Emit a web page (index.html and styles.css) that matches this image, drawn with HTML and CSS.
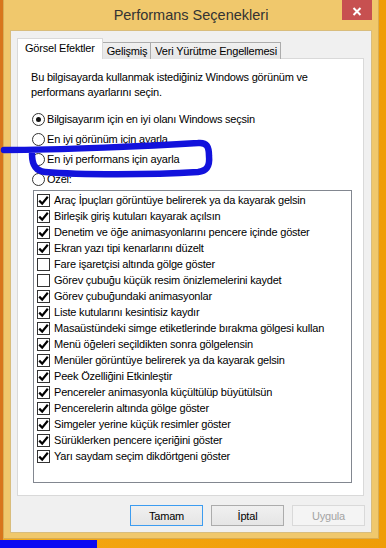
FILE: index.html
```html
<!DOCTYPE html>
<html lang="tr">

<head>
    <meta charset="UTF-8">
    <meta name="viewport" content="width=device-width, initial-scale=1.0">
    <title>Performans Seçenekleri</title>
    <link rel="stylesheet" href="styles.css">
</head>

<body>
    <div class="window">
        <div class="titlebar">
            <span class="title">Performans Seçenekleri</span>
            <button class="close" type="button">
                <svg width="10" height="9" viewBox="0 0 10 9">
                    <path d="M1.5 1 L8.5 8 M8.5 1 L1.5 8" stroke="#fff" stroke-width="2" />
                </svg>
            </button>
        </div>
        <div class="client">
            <div class="tabs">
                <div class="tab active">Görsel Efektler</div>
                <div class="tab">Gelişmiş</div>
                <div class="tab">Veri Yürütme Engellemesi</div>
            </div>
            <div class="panel">
                <p class="intro">Bu bilgisayarda kullanmak istediğiniz Windows görünüm ve<br>performans ayarlarını seçin.</p>
                <div class="radios">
                    <div class="radio-row"><span class="radio checked"></span>Bilgisayarım için en iyi olanı Windows seçsin</div>
                    <div class="radio-row"><span class="radio"></span>En iyi görünüm için ayarla</div>
                    <div class="radio-row"><span class="radio"></span>En iyi performans için ayarla</div>
                    <div class="radio-row"><span class="radio"></span>Özel:</div>
                </div>
                <div class="listbox" id="effects"></div>
            </div>
            <div class="buttons">
                <button class="btn default" type="button">Tamam</button>
                <button class="btn" type="button">İptal</button>
                <button class="btn" type="button" disabled>Uygula</button>
            </div>
        </div>
    </div>
    <div class="scribble-bottom"></div>

    <svg class="scribble" width="386" height="548" viewBox="0 0 386 548">
        <path d="M4 150 C60 150, 150 146, 198 143 C207 142, 209 147, 209 156 C210 166, 207 171, 198 172 C150 175, 80 175, 45 172 C35 171, 32 164, 32 154"
            fill="none" stroke="#1212dc" stroke-width="6.5" stroke-linecap="round" stroke-linejoin="round" />
    </svg>

    <script>
    const effects = [
        ["Araç İpuçları görüntüye belirerek ya da kayarak gelsin", true],
        ["Birleşik giriş kutuları kayarak açılsın", true],
        ["Denetim ve öğe animasyonlarını pencere içinde göster", true],
        ["Ekran yazı tipi kenarlarını düzelt", true],
        ["Fare işaretçisi altında gölge göster", false],
        ["Görev çubuğu küçük resim önizlemelerini kaydet", false],
        ["Görev çubuğundaki animasyonlar", true],
        ["Liste kutularını kesintisiz kaydır", true],
        ["Masaüstündeki simge etiketlerinde bırakma gölgesi kullan", true],
        ["Menü öğeleri seçildikten sonra gölgelensin", true],
        ["Menüler görüntüye belirerek ya da kayarak gelsin", true],
        ["Peek Özelliğini Etkinleştir", true],
        ["Pencereler animasyonla küçültülüp büyütülsün", true],
        ["Pencerelerin altında gölge göster", true],
        ["Simgeler yerine küçük resimler göster", true],
        ["Sürüklerken pencere içeriğini göster", true],
        ["Yarı saydam seçim dikdörtgeni göster", true]
    ];

    const tick = '<svg width="11" height="11" viewBox="0 0 11 11"><path d="M1.2 5.6 L4.2 8.6 L9.8 1.8" fill="none" stroke="#000" stroke-width="2.2"/></svg>';
    const list = document.getElementById("effects");

    for (const [label, on] of effects) {
        const row = document.createElement("div");
        row.className = "item";
        row.innerHTML = '<span class="check">' + (on ? tick : '') + '</span><span></span>';
        row.lastChild.textContent = label;
        list.appendChild(row);
    }
    </script>
</body>

</html>
```
FILE: styles.css
```css
html, body {
    margin: 0;
    width: 386px;
    height: 548px;
    overflow: hidden;
}

body {
    background: linear-gradient(to right, #d8761c 0 3px, #f4a712 3px, #ef9d08);
    font-family: "Liberation Sans", Arial, sans-serif;
    font-size: 11px;
    letter-spacing: -0.2px;
    color: #000;
}

.window {
    box-sizing: border-box;
    width: 376px;
    height: 539px;
    margin-left: 3px;
    padding: 0 6px 5px 6px;
    background-color: #f0c86c;
    border: 1px solid #d8ad55;
    border-top: none;
}

.titlebar {
    display: grid;
    grid-template-columns: 1fr auto 1fr;
    height: 30px;
}

.title {
    grid-column: 2;
    align-self: center;
    font-size: 14.5px;
    letter-spacing: 0;
    color: #333;
}

.close {
    grid-column: 3;
    justify-self: end;
    align-self: start;
    width: 30px;
    height: 20px;
    padding: 0;
    border: none;
    background-color: #c75050;
    display: flex;
    align-items: center;
    justify-content: center;
}

.close svg {
    margin-top: 2px;
}

.client {
    box-sizing: border-box;
    height: 503px;
    padding: 7px 0 0 6px;
    background-color: #f0f0f0;
    border: 1px solid #d9bd7c;
}

.tabs {
    display: flex;
    align-items: flex-end;
    height: 21px;
    margin-bottom: -1px;
}

.tab {
    box-sizing: border-box;
    height: 17px;
    padding: 0 3px 0 4px;
    border: 1px solid #acacac;
    border-bottom: none;
    border-left: none;
    background: linear-gradient(#f0f0f0, #e5e5e5);
    line-height: 16px;
    white-space: nowrap;
}

.tab.active {
    position: relative;
    z-index: 1;
    height: 21px;
    padding: 0 7px;
    border: 1px solid #d9d9d9;
    border-bottom: none;
    background: #fff;
    line-height: 19px;
}

.panel {
    box-sizing: border-box;
    width: 347px;
    height: 438px;
    padding: 11px 0 0 13px;
    background-color: #fff;
    border: 1px solid #d9d9d9;
}

.intro {
    margin: 0;
    line-height: 15px;
}

.radios {
    margin: 9px 0 0 1px;
}

.radio-row {
    display: flex;
    align-items: center;
    height: 20px;
}

.radio {
    box-sizing: border-box;
    width: 13px;
    height: 13px;
    margin-right: 2px;
    border: 1px solid #333;
    border-radius: 50%;
    background: #fff;
    display: flex;
    align-items: center;
    justify-content: center;
}

.radio.checked::after {
    content: "";
    width: 5px;
    height: 5px;
    border-radius: 50%;
    background: #111;
}

.listbox {
    box-sizing: border-box;
    width: 319px;
    height: 293px;
    margin: 1px 0 0 2px;
    padding-top: 1px;
    border: 1px solid #828790;
}

.item {
    display: flex;
    align-items: center;
    height: 16px;
    white-space: nowrap;
}

.check {
    box-sizing: border-box;
    width: 13px;
    height: 13px;
    margin: 0 4px 0 3px;
    border: 1px solid #333;
    background: #fff;
}

.check svg {
    display: block;
}

.buttons {
    display: flex;
    justify-content: flex-end;
    gap: 8px;
    margin-top: 9px;
    padding-right: 6px;
}

.btn {
    box-sizing: border-box;
    width: 73px;
    height: 21px;
    padding: 0;
    border: 1px solid #acacac;
    background: linear-gradient(#f0f0f0, #e5e5e5);
    font-family: inherit;
    font-size: 11px;
    letter-spacing: -0.2px;
    color: #000;
}

.btn.default {
    border-color: #3c9cf0;
}

.btn:disabled {
    border-color: #d9d9d9;
    background: #f4f4f4;
    color: #a3a3a3;
}

.scribble-bottom {
    width: 97px;
    height: 8px;
    margin-top: 1px;
    background-color: #0a0af2;
}

.scribble {
    position: absolute;
    left: 0;
    top: 0;
    pointer-events: none;
}
```
